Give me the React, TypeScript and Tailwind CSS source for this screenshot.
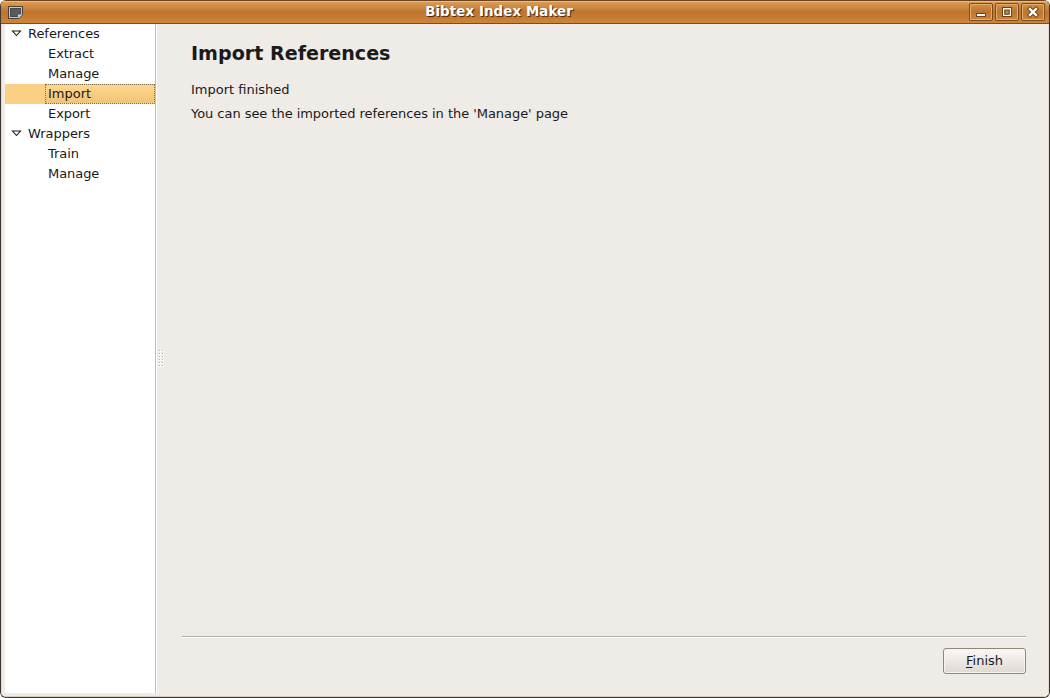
import React from "react";

type Group = { label: string; items: { label: string; selected?: boolean }[] };

const groups: Group[] = [
  {
    label: "References",
    items: [
      { label: "Extract" },
      { label: "Manage" },
      { label: "Import", selected: true },
      { label: "Export" },
    ],
  },
  { label: "Wrappers", items: [{ label: "Train" }, { label: "Manage" }] },
];

function WindowIcon() {
  return (
    <svg width="15" height="13" viewBox="0 0 15 13">
      <path d="M0 0h15v9l-4 4H0z" fill="#4a4035" />
      <path d="M1 1h13v8l-3 3H1z" fill="#c9c8c2" />
      <path d="M2 2h11v6l-3 3H2z" fill="#444a4b" />
      <path d="M3 3h9v5l-2 2H3z" fill="#555b5c" />
      <path d="M10 12.5V8.5h4.5z" fill="#e4e1d9" stroke="#8b857a" strokeWidth="0.6" />
    </svg>
  );
}

function TitleButton({ children }: { children: React.ReactNode }) {
  return (
    <button className="flex h-[18px] w-6 items-center justify-center rounded-[2px] border border-[#7b4c1d] bg-linear-to-b from-[#d3904a] via-[#bd752e] to-[#ce8538] shadow-[inset_0_0_0_1px_#e2ad70]">
      <svg width="12" height="12" viewBox="0 0 12 12">
        {children}
      </svg>
    </button>
  );
}

function TitleBar() {
  return (
    <header className="flex h-6 shrink-0 justify-between border-t border-b border-t-[#6b4523] border-b-[#7b4d20] bg-linear-to-b from-[#e0a056] from-0% via-[#bd752e] via-50% to-[#ce8538] to-100% shadow-[inset_0_1px_0_#eeb883]">
      <div className="w-[80px] pt-[5px] pl-[7px]">
        <WindowIcon />
      </div>
      <h1 className="grow pr-[52px] text-center text-[13.33px] leading-[21px] font-bold tracking-[0.12px] text-white [text-shadow:1px_1px_1px_#3c2612]">
        Bibtex Index Maker
      </h1>
      <div className="flex gap-0.5 pt-0.5 pr-1">
        <TitleButton>
          <path d="M1 7h10v4H1z" fill="#6b421b" />
          <path d="M2 8h8v2H2z" fill="#fff" />
        </TitleButton>
        <TitleButton>
          <path d="M1 1h10v10H1z" fill="#6b421b" />
          <path d="M2 2h8v8H2z" fill="#fff" />
          <path d="M3.2 3.5h5.6v5.3H3.2z" fill="#6b421b" />
          <path d="M4.2 4.5h3.6v3.3H4.2z" fill="#c67d34" />
        </TitleButton>
        <TitleButton>
          <path d="M3 3l6 6M9 3l-6 6" stroke="#6b421b" strokeWidth="4.4" strokeLinecap="square" />
          <path d="M3 3l6 6M9 3l-6 6" stroke="#fff" strokeWidth="2.4" strokeLinecap="square" />
        </TitleButton>
      </div>
    </header>
  );
}

function Sidebar() {
  return (
    <nav className="w-[152px] shrink-0 border-r border-white bg-white">
      <div className="h-full border-r border-[#bfbfbd]">
        {groups.map((group) => (
          <section key={group.label}>
            <div className="flex h-5 items-center pl-[6px]">
              <svg width="11" height="7" viewBox="0 0 11 7" className="mr-[6px] mb-px shrink-0">
                <path d="M1.5 1h8l-4 4.5z" fill="#fff" stroke="#1a1a1a" strokeWidth="1.1" />
              </svg>
              <span className="leading-5 tracking-[-0.04px]">{group.label}</span>
            </div>
            {group.items.map((item) => (
              <div
                key={item.label}
                className={item.selected ? "flex h-5 bg-[#fad084] pl-10" : "flex h-5 pl-10"}
              >
                <span
                  className={
                    item.selected
                      ? "grow border border-dotted border-[#7d704f] bg-linear-to-b from-[#ffd78d] to-[#f0c478] pl-0.5 leading-[18px]"
                      : "pl-[3px] leading-5 tracking-[-0.06px]"
                  }
                >
                  {item.label}
                </span>
              </div>
            ))}
          </section>
        ))}
      </div>
    </nav>
  );
}

function SplitHandle() {
  const dots = [0, 1, 2, 3, 4, 5].flatMap((row) => [0, 1].map((col) => ({ row, col })));
  return (
    <div className="flex w-[7px] shrink-0 items-center justify-end">
      <svg width="5" height="18" viewBox="0 0 5 18" shapeRendering="crispEdges" className="mt-px">
        {dots.map(({ row, col }) => (
          <g key={`${row}-${col}`}>
            <rect x={col * 3} y={row * 3} width="2" height="2" fill="#fff" />
            <rect x={col * 3} y={row * 3} width="1" height="1" fill="#b3aca5" />
          </g>
        ))}
      </svg>
    </div>
  );
}

export default function App() {
  return (
    <div className="h-[698px] w-[1050px] bg-white font-['DejaVu_Sans',sans-serif] text-[13px] text-[#1a1a1a]">
      <div className="flex h-full flex-col overflow-hidden rounded-[6px] border border-t-0 border-[#403631] bg-[#efebe7]">
        <TitleBar />
        <div className="flex min-h-0 grow border-x border-b border-x-[#ded5cc] border-b-[#d5ccc2] pb-[3px] pl-[3px]">
          <Sidebar />
          <SplitHandle />
          <main className="flex grow flex-col pr-[22px] pl-[18px]">
            <div className="grow pt-[17px] pl-[9px]">
              <h2 className="text-[19.1px] leading-[26px] font-bold">Import References</h2>
              <p className="mt-[13px] leading-5">Import finished</p>
              <p className="mt-1 leading-5 tracking-[-0.045px]">
                You can see the imported references in the 'Manage' page
              </p>
            </div>
            <footer className="flex h-[57px] items-start justify-end border-t border-[#b3b1ab] shadow-[inset_0_1px_0_#fff]">
              <button className="mt-[11px] h-[26px] w-[83px] rounded-[3px] border border-[#8f8779] bg-linear-to-b from-[#faf8f6] to-[#ded8d1] leading-[22px] shadow-[inset_0_0_0_1px_#f7f4f0]">
                <span className="underline decoration-1 underline-offset-2">F</span>inish
              </button>
            </footer>
          </main>
        </div>
      </div>
    </div>
  );
}
